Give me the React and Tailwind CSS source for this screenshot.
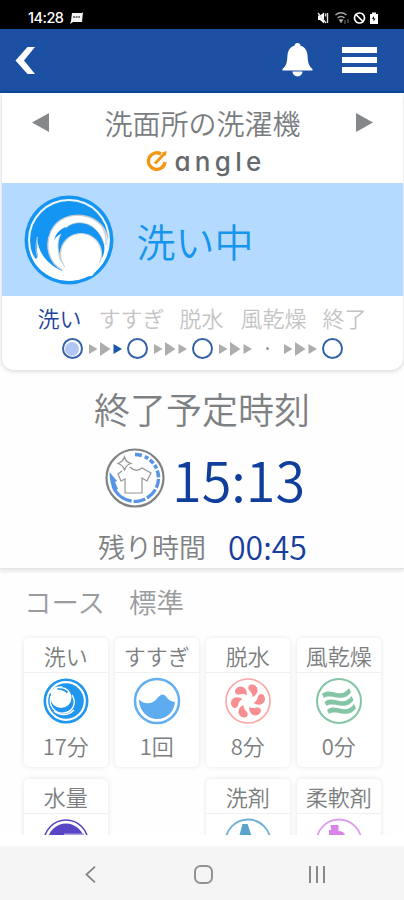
import React from "react";

const steps = [
  { label: "洗い", x: "ml-[37px]", active: true },
  { label: "すすぎ", x: "ml-[17px]" },
  { label: "脱水", x: "ml-[15px]" },
  { label: "風乾燥", x: "ml-[17px]" },
  { label: "終了", x: "ml-[16px]" },
];

function StatusBar() {
  return (
    <div className="h-[29px] shrink-0 bg-black flex items-center pt-[7px] pl-[28px] pr-[25px] text-white">
      <span className="font-['Inter','Liberation_Sans',sans-serif] text-[14.5px] leading-none font-medium tracking-[-0.5px] w-[37px]">14:28</span>
      <svg className="ml-[5px]" width="13" height="13" viewBox="0 0 13 13">
        <path d="M2 1h10l1-1-1 10H3l-3 2 1-3z" fill="#f4f4f4" />
        <path d="M3 5h7" stroke="#555" strokeWidth="1.6" strokeDasharray="2 .6" />
      </svg>
      <svg className="ml-auto" width="62" height="14" viewBox="317 11 62 14" fill="none">
        <path d="M318 15.500h2l4-3v11l-4-3.500h-2z" fill="#fff" />
        <path d="M318 13l8 10M327.500 13v10M325.500 13.500v3" stroke="#ddd" strokeWidth="1.400" />
        <path d="M335.500 15q5.500-4.500 11 0M337.500 18q3.500-3 7 0" stroke="#aaa" strokeWidth="1.500" />
        <path d="M339 19.500h4l-2 3.500zM345 20v4M348 19v4" fill="#ccc" stroke="#777" />
        <circle cx="359.500" cy="18" r="5" stroke="#fff" strokeWidth="1.700" />
        <path d="M356 14.500l7 7" stroke="#fff" strokeWidth="1.700" />
        <path d="M372 12.500h4v1.500h2v10h-8V14h2z" fill="#fff" />
        <path d="M374 16l-2 3h1.500v2.500l2-3H374z" fill="#000" />
      </svg>
    </div>
  );
}

function Header() {
  return (
    <header className="h-[64px] shrink-0 bg-[#1c50a2] border-b-2 border-[#0c489a] flex items-center pl-[15px] pr-[27px]">
      <svg width="21" height="27" viewBox="0 0 21 27"><path d="M12.500 0H20L9 13.500 20 27H12.500L.5 13.500z" fill="#fff" /></svg>
      <svg className="ml-auto" width="31" height="34" viewBox="0 0 31 34" fill="#fff">
        <path d="M15.500 0a3 3 0 0 1 3 2.700C23 4 25 7.500 25.500 12c.4 7 1 11 5 14v1.500H.5V26c4-3 4.600-7 5-14C6 7.500 8 4 12.500 2.700a3 3 0 0 1 3-2.700z" />
        <path d="M10.500 28.500h10a5 5 0 0 1-10 0z" />
      </svg>
      <div className="ml-[29px] w-[35px] flex flex-col gap-[4px]">
        <div className="h-[6px] bg-white" />
        <div className="h-[6px] bg-white" />
        <div className="h-[6px] bg-white" />
      </div>
    </header>
  );
}

function BigWave() {
  return (
    <svg width="90" height="90" viewBox="0 0 90 90">
      <circle cx="45" cy="45" r="44.500" fill="#1595f3" />
      <circle cx="45" cy="45" r="41" fill="#eef7ff" />
      <circle cx="45" cy="45" r="39" fill="#1595f3" />
      <path d="M13.500 42C13 55 21 68 38 76l45-16 2-8C82 72 66 85.500 45 85.500 24 85.500 7 71 5 52l6 12 3-2-1-6z" fill="#fff" />
      <path d="M13.500 42c-2 8-2 14 0 20-1 3-3 2-4-2" fill="none" stroke="#b9d3e6" strokeWidth="1" />
      <path d="M38 74.500c5-1 6 4 1.500 5.500" fill="#fff" stroke="#b8c2ca" strokeWidth=".9" />
      <path d="M38 75C25 68 20 51 27 36 33 24 46 18 61 21c14 3 23 15 23 26 0 14-8 26-22 34H41z" fill="#fff" />
      <path d="M38 75C25 68 20 51 27 36 33 24 46 18 61 21c14 3 21 13 23 22" fill="none" stroke="#c3cad0" strokeWidth="1.300" />
      <path d="M37 64C31 51 34 35 48 29c15-5 28 5 32 20 1 6 0 10-2 14L70 45 57 38 44 43z" fill="#1595f3" />
      <path d="M37 64C31 51 34 35 48 29c15-5 28 5 32 20" fill="none" stroke="#c3cad0" strokeWidth=".8" />
      <path d="M30 45c2-7 6-11 12-13l-2 6c-5 1-8 4-10 7z" fill="#1595f3" />
      <path d="M77 30q6 8 5 20" fill="none" stroke="#ced6dc" strokeWidth="1.500" />
      <circle cx="57" cy="59" r="20.500" fill="#fff" stroke="#cbd2d7" strokeWidth="1.200" />
      <path d="M40 68l8-12 18-2 11 16-9 11-24 2z" fill="#fff" />
      <path d="M35 57c0 6 1 9 4 11" fill="none" stroke="#c8cfd4" strokeWidth="1.200" />
    </svg>
  );
}

function Arrows({ active }) {
  return (
    <svg width="34" height="16" viewBox="0 0 34 16" fill="#adadad">
      <path d="M1 3l8.500 5L1 13zM12 1l10.500 7L12 15z" />
      <path d="M25.500 3l8.500 5-8.500 5z" fill={active ? "#1a56a8" : "#adadad"} />
    </svg>
  );
}

function Ring({ active }) {
  return (
    <div className="size-[21px] rounded-full border-2 border-[#3562a6] bg-white p-[1.5px]">
      {active && <div className="size-full rounded-full bg-[#b0c6f3]" />}
    </div>
  );
}

function MachineCard() {
  return (
    <section className="mx-[1.5px] h-[277px] shrink-0 rounded-b-[12px] bg-white shadow-[0_1px_5px_rgba(0,0,0,0.18)] flex flex-col">
      <div className="h-[58px] shrink-0 flex items-center justify-between pl-[30px] pr-[29px]">
        <svg width="17" height="19" viewBox="0 0 17 19"><path d="M17 0v19L0 9.500z" fill="#85888a" /></svg>
        <h1 className="text-[28px] leading-none font-[350] text-[#7a7d7f] pt-[1px]">洗面所の洗濯機</h1>
        <svg width="17" height="19" viewBox="0 0 17 19"><path d="M0 0v19l17-9.500z" fill="#85888a" /></svg>
      </div>
      <div className="h-[32px] shrink-0 flex items-start pl-[144px]">
        <svg width="23" height="22" viewBox="0 0 23 22" fill="none" stroke="#f19712" strokeWidth="3.400">
          <path d="M15 3A8.300 8.300 0 1 0 19 11" />
          <path d="M9 12.500L18.500 2.500" strokeWidth="3" /><path d="M16 1.500l4.500-1.500-.5 5z" fill="#f19712" stroke="none" />
        </svg>
        <span className="ml-[6px] mt-[-5px] text-[26px] leading-[32px] font-medium tracking-[4.3px] text-[#66696c] font-['Inter','Liberation_Sans',sans-serif] [font-feature-settings:'cv11'_1]">angle</span>
      </div>
      <div className="h-[113px] shrink-0 bg-[#b5daff] flex items-center pl-[22px]">
        <BigWave />
        <p className="ml-[23px] pt-[2px] text-[39px] leading-none font-[350] text-[#1595ed]">洗い中</p>
      </div>
      <div className="mt-[8px] mb-[2px] ml-[-1px] flex text-[22px] leading-[26px]">
        {steps.map((s) => (
          <span key={s.label} className={`${s.x} whitespace-nowrap font-[350] ${s.active ? "text-[#20449a]" : "text-[#c4c4c4]"}`}>{s.label}</span>
        ))}
      </div>
      <div className="ml-[60px] mt-[6px] h-[21px] flex items-center">
        <Ring active /><div className="w-[44px] flex justify-center"><Arrows active /></div>
        <Ring /><div className="w-[44px] flex justify-center"><Arrows /></div>
        <Ring /><div className="w-[44px] flex justify-center"><Arrows /></div>
        <div className="w-[21px] flex justify-center"><div className="size-[3px] rounded-full bg-[#999]" /></div>
        <div className="w-[44px] flex justify-center"><Arrows /></div>
        <Ring />
      </div>
    </section>
  );
}

function ShirtIcon() {
  return (
    <svg width="60" height="60" viewBox="0 0 60 60" fill="none">
      <circle cx="30" cy="30" r="28.500" stroke="#808386" strokeWidth="2.200" />
      <path d="M30 6.500a23.500 23.500 0 0 1 23.500 23.500" stroke="#5793e6" strokeWidth="3.600" strokeDasharray="7 3 4 2 5 2 4 2" />
      <path d="M53.500 31A23.500 23.500 0 0 1 8 38" stroke="#5793e6" strokeWidth="3.300" strokeDasharray="9 2 12 2 12 2 40 1" />
      <path d="M4.500 24l7.500 9-2 1 3 7-4 2c-3-5-4.500-11-4.500-19z" fill="#5793e6" />
      <path d="M25 19q6 6 12 1l9 5-4 8-5-3v15H20V31l-4 2-3-7 4-3" fill="#fff" stroke="#929496" strokeWidth="1.200" />
      <path d="M19.500 9c1 4 3 5 6.500 6.500-4 1-5.500 3-6.500 7-1-4-3-6-6.500-7 3.500-1.500 5.500-3 6.500-6.500z" fill="#fff" stroke="#929496" strokeWidth="1.200" />
    </svg>
  );
}

function TimeCard() {
  return (
    <section className="h-[199px] shrink-0 flex flex-col border-b border-[#e4e4e4] shadow-[0_3px_3px_rgba(0,0,0,0.08)]">
      <h2 className="mt-[20px] text-center text-[36px] leading-[36px] font-[350] text-[#7e8183]">終了予定時刻</h2>
      <div className="mt-[20px] h-[64px] flex items-center pl-[105px]">
        <ShirtIcon />
        <span className="ml-[7px] pt-[1px] text-[54px] leading-[64px] text-[#103f9b] font-[350]">15:13</span>
      </div>
      <div className="mt-[18px] h-[36px] flex items-center pl-[98px]">
        <span className="w-[130px] text-[27px] leading-none font-[350] text-[#7e8183]">残り時間</span>
        <span className="text-[32px] leading-none text-[#173e9b] font-[350]">00:45</span>
      </div>
    </section>
  );
}

function WashIcon() {
  return (
    <svg width="46" height="46" viewBox="0 0 46 46">
      <circle cx="23" cy="23" r="21.200" fill="#fff" stroke="#2196ef" strokeWidth="2.600" />
      <circle cx="23" cy="23" r="17.800" fill="#2196ef" />
      <circle cx="18" cy="19.500" r="10.500" fill="#fff" />
      <path d="M8 18c-3 10 4 18 13 17 9-1 13-10 8-18" fill="none" stroke="#fff" strokeWidth="1.400" />
      <path d="M11 33c6 5 14 5 20-1" fill="none" stroke="#fff" strokeWidth="1.300" />
      <path d="M7 14l5-5 8-1-6 4-5 6z" fill="#fff" />
      <path d="M14 10.500c4-1 8 0 11 3l-1 2c-3-3-6-4-10-4z" fill="#2196ef" />
    </svg>
  );
}

function RinseIcon() {
  return (
    <svg width="48" height="48" viewBox="0 0 48 48">
      <circle cx="24" cy="24" r="22" fill="#fff" stroke="#64aff0" strokeWidth="2.500" />
      <path d="M6 22.500c4 4 9 4.500 13 3 5-2 7-8 10.500-8 4 0 4.500 7 12.500 7.500-1 10-8 17-18 17S6 33 6 22.500z" fill="#5eacf0" />
    </svg>
  );
}

function SpinIcon() {
  return (
    <svg width="48" height="48" viewBox="0 0 48 48">
      <circle cx="24" cy="24" r="22" fill="#fff" stroke="#faa8a8" strokeWidth="1.700" />
      {[0, 60, 120, 180, 240, 300].map((a) => (
        <path key={a} transform={`rotate(${a} 24 24)`} d="M28.500 20c0-3-1-4.500-3-6.500-2.500-2.500-1-6 2-6 4 0 6.500 3 6 6.500-.4 3-2.500 5-5 6z" fill="#f78e92" />
      ))}
    </svg>
  );
}

function DryIcon() {
  return (
    <svg width="48" height="48" viewBox="0 0 48 48">
      <circle cx="24" cy="24" r="22" fill="#fff" stroke="#83c5a5" strokeWidth="2" />
      {[0, 1, 2].map((i) => (
        <path key={i} transform={`translate(${i * 2.5} ${i * 8})`} d="M7 17c5-4 10-2 15-1 6 1 9-1 12-5l2 4c-3 5-8 6.500-14 5.500-5-1-10-2-13 .5z" fill="#83c5a5" />
      ))}
    </svg>
  );
}

function WaterIcon() {
  return (
    <svg width="46" height="46" viewBox="0 0 46 46">
      <circle cx="23" cy="23" r="22" fill="#fff" stroke="#5946bf" strokeWidth="1.600" />
      <circle cx="23" cy="23" r="18.500" fill="#5946c6" />
      <path d="M21 14.500h20v5H21z" fill="#ad9fe1" />
    </svg>
  );
}

function DetergentIcon() {
  return (
    <svg width="48" height="48" viewBox="0 0 48 48">
      <circle cx="24" cy="24" r="22.500" fill="#fff" stroke="#6cb0d8" strokeWidth="1.800" />
      <path d="M18.500 6h5l4.500 13H15z" fill="#5ca4cb" />
    </svg>
  );
}

function SoftenerIcon() {
  return (
    <svg width="48" height="48" viewBox="0 0 48 48">
      <circle cx="24" cy="24" r="22.500" fill="#fff" stroke="#df9cef" strokeWidth="1.800" />
      <path d="M15.500 7h8v6c4 0 6 2 7 5H14v-6h2z" fill="#d985e8" />
    </svg>
  );
}

function Tile({ label, value, children }) {
  return (
    <div className="h-[129px] w-[84.5px] rounded-[5px] bg-white shadow-[0_0_5px_rgba(0,0,0,0.1)] flex flex-col items-center">
      <div className="h-[35px] w-full shrink-0 flex items-center justify-center border-b border-[#f0f0f0] text-[22px] leading-none font-[350] text-[#7c7e80] whitespace-nowrap">{label}</div>
      <div className="mt-[4px] h-[48px] shrink-0 flex items-center justify-center">{children}</div>
      {value && <div className="mt-[9px] text-[22px] leading-none font-[350] text-[#7c7e80]">{value}</div>}
    </div>
  );
}

function NavBar() {
  return (
    <nav className="h-[54px] shrink-0 bg-[#f5f5f5] flex items-center pl-[85px] pt-[3px]">
      <svg width="11" height="17" viewBox="0 0 11 17"><path d="M10 .7L1.500 8.500l8.500 7.800" fill="none" stroke="#858585" strokeWidth="1.800" /></svg>
      <div className="ml-[98px] size-[19px] rounded-[6.5px] border-2 border-[#929292]" />
      <div className="ml-[96px] flex gap-[5px]">
        <div className="h-[17px] w-[2px] bg-[#898989]" /><div className="h-[17px] w-[2px] bg-[#898989]" /><div className="h-[17px] w-[2px] bg-[#898989]" />
      </div>
    </nav>
  );
}

export default function App() {
  return (
    <div lang="ja" className="w-[404px] h-[900px] overflow-hidden bg-[#fefefe] flex flex-col font-['Noto_Sans_CJK_JP',sans-serif]">
      <StatusBar />
      <Header />
      <MachineCard />
      <TimeCard />
      <main className="h-[266px] shrink-0 overflow-hidden">
        <div className="pt-[18px] pl-[24px] flex text-[27.5px] leading-[28px] font-[350] text-[#9a9c9e]">
          <span className="w-[105px]">コース</span>
          <span>標準</span>
        </div>
        <div className="mt-[23px] pl-[23.5px] grid grid-cols-[repeat(4,84.5px)] gap-x-[6.5px] gap-y-[12px]">
          <Tile label="洗い" value="17分"><WashIcon /></Tile>
          <Tile label="すすぎ" value="1回"><RinseIcon /></Tile>
          <Tile label="脱水" value="8分"><SpinIcon /></Tile>
          <Tile label="風乾燥" value="0分"><DryIcon /></Tile>
          <Tile label="水量"><WaterIcon /></Tile>
          <div />
          <Tile label="洗剤"><DetergentIcon /></Tile>
          <Tile label="柔軟剤"><SoftenerIcon /></Tile>
        </div>
      </main>
      <div className="h-[11px] shrink-0 bg-white" />
      <NavBar />
    </div>
  );
}
